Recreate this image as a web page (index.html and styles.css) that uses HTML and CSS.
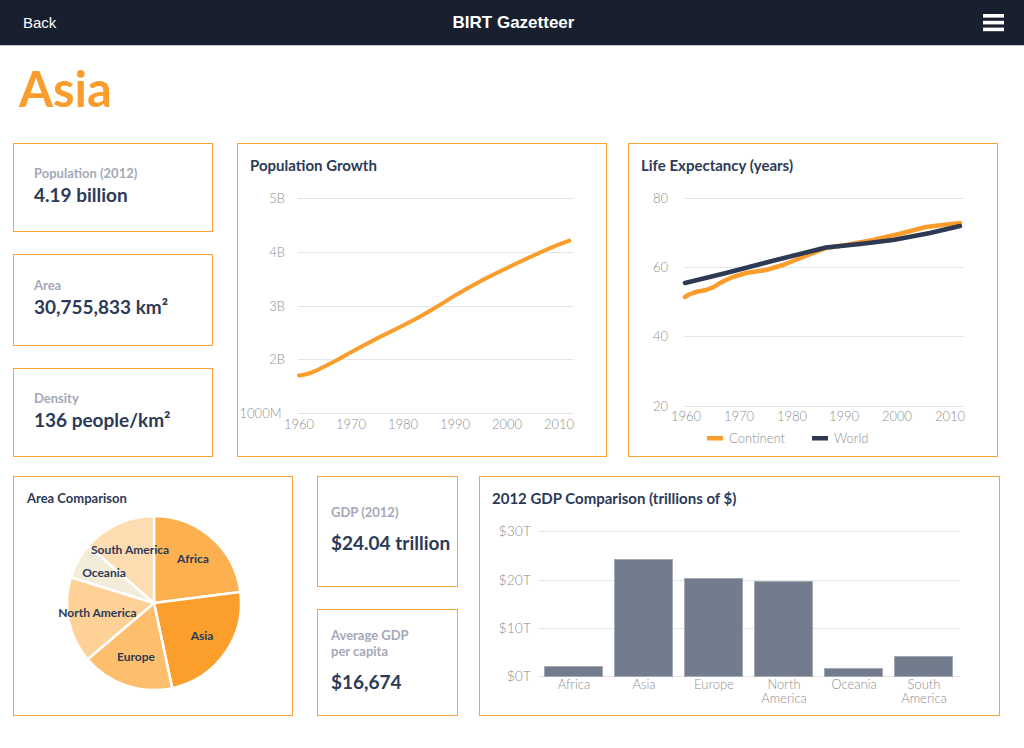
FILE: index.html
```html
<!DOCTYPE html>
<html lang="en">
<head>
<meta charset="utf-8">
<title>BIRT Gazetteer</title>
<link rel="stylesheet" href="styles.css">
</head>
<body>
<header class="topbar">
  <span class="back">Back</span>
  <span class="apptitle">BIRT Gazetteer</span>
  <span class="menu">
    <svg width="21" height="18" viewBox="0 0 21 18"><rect x="0" y="0" width="21" height="3.6" fill="#fff"/><rect x="0" y="6.8" width="21" height="3.6" fill="#fff"/><rect x="0" y="13.6" width="21" height="3.6" fill="#fff"/></svg>
  </span>
</header>

<h1 class="region">Asia</h1>

<section class="row row1">
  <div class="stats">
    <div class="stat s89">
      <div class="label">Population (2012)</div>
      <div class="value">4.19 billion</div>
    </div>
    <div class="stat s92">
      <div class="label">Area</div>
      <div class="value">30,755,833 km²</div>
    </div>
    <div class="stat s89">
      <div class="label">Density</div>
      <div class="value">136 people/km²</div>
    </div>
  </div>

  <div class="card chart popgrowth">
    <h3 class="ctitle">Population Growth</h3>
    <svg class="plot" width="368" height="282" viewBox="0 0 368 282">
      <g stroke="#e3e5e9" stroke-width="1">
        <line x1="60" y1="24.5" x2="335" y2="24.5"/>
        <line x1="60" y1="78.5" x2="335" y2="78.5"/>
        <line x1="60" y1="132.5" x2="335" y2="132.5"/>
        <line x1="60" y1="185.5" x2="335" y2="185.5"/>
        <line x1="60" y1="239.5" x2="335" y2="239.5"/>
      </g>
      <g class="axis" text-anchor="end">
        <text x="47" y="28.5">5B</text>
        <text x="47" y="82.5">4B</text>
        <text x="47" y="136.5">3B</text>
        <text x="47" y="189.5">2B</text>
        <text x="43.5" y="243.5">1000M</text>
      </g>
      <g class="axis" text-anchor="middle">
        <text x="61" y="254.5">1960</text>
        <text x="113" y="254.5">1970</text>
        <text x="165" y="254.5">1980</text>
        <text x="217" y="254.5">1990</text>
        <text x="269" y="254.5">2000</text>
        <text x="321" y="254.5">2010</text>
      </g>
      <polyline fill="none" stroke="#fa9d2c" stroke-width="4" stroke-linejoin="round" stroke-linecap="round"
        points="61,201.4 66,200.8 71.4,199.3 79,196.3 87,192.3 100,185.5 113,178.3 126,171.2 139,164.4 152,158 165,151.5 178,144.8 191,137.5 204,129.6 217,121.4 230,114 243,106.9 256,100.3 269,94 282,87.7 295,81.7 308,75.8 321,70.4 331.4,66.6"/>
    </svg>
  </div>

  <div class="card chart life">
    <h3 class="ctitle">Life Expectancy (years)</h3>
    <svg class="plot" width="368" height="282" viewBox="0 0 368 282">
      <g stroke="#e3e5e9" stroke-width="1">
        <line x1="55" y1="24.5" x2="335" y2="24.5"/>
        <line x1="55" y1="93.5" x2="335" y2="93.5"/>
        <line x1="55" y1="162.5" x2="335" y2="162.5"/>
        <line x1="55" y1="232.5" x2="335" y2="232.5"/>
      </g>
      <g class="axis" text-anchor="end">
        <text x="39" y="28.5">80</text>
        <text x="39" y="97.5">60</text>
        <text x="39" y="166.5">40</text>
        <text x="39" y="236.5">20</text>
      </g>
      <g class="axis" text-anchor="middle">
        <text x="57" y="246.5">1960</text>
        <text x="110" y="246.5">1970</text>
        <text x="163" y="246.5">1980</text>
        <text x="215" y="246.5">1990</text>
        <text x="268" y="246.5">2000</text>
        <text x="321" y="246.5">2010</text>
      </g>
      <polyline fill="none" stroke="#fa9d2c" stroke-width="4.5" stroke-linejoin="round" stroke-linecap="round"
        points="56,123 60,120.5 64,119 69,117.5 77,116 85,113 90,109.5 97,106 104,103 117,99 137,96 154,91 174,83 197,74 217,71 244,66 270,60 297,53 331,49"/>
      <polyline fill="none" stroke="#2d3a52" stroke-width="4.5" stroke-linejoin="round" stroke-linecap="round"
        points="56,109 97,99 147,86 197,73.5 231,70 264,66 301,59 331,52"/>
      <rect x="78" y="262" width="16" height="4.5" fill="#fa9d2c"/>
      <text class="legend" x="100" y="268.5">Continent</text>
      <rect x="183" y="262" width="16" height="4.5" fill="#2d3a52"/>
      <text class="legend" x="205" y="268.5">World</text>
    </svg>
  </div>
</section>

<section class="row row2">
  <div class="card areacomp">
    <h3 class="ctitle small">Area Comparison</h3>
    <svg class="plot" width="278" height="209" viewBox="0 0 278 209">
      <g stroke="#fff" stroke-width="2.5" stroke-linejoin="round">
        <path d="M140 97 L140 10 A87 87 0 0 1 226.3 85.9 Z" fill="#fcb04f"/>
        <path d="M140 97 L226.3 85.9 A87 87 0 0 1 158.2 182.1 Z" fill="#fb9e2b"/>
        <path d="M140 97 L158.2 182.1 A87 87 0 0 1 73.6 153.3 Z" fill="#fdbf6e"/>
        <path d="M140 97 L73.6 153.3 A87 87 0 0 1 56.9 71.3 Z" fill="#fed196"/>
        <path d="M140 97 L56.9 71.3 A87 87 0 0 1 74.5 39.7 Z" fill="#f3ecd9"/>
        <path d="M140 97 L74.5 39.7 A87 87 0 0 1 140 10 Z" fill="#fedcb1"/>
      </g>
      <g class="pielabel" text-anchor="middle">
        <text x="179" y="57">Africa</text>
        <text x="188" y="134">Asia</text>
        <text x="122" y="155">Europe</text>
        <text x="83.5" y="111">North America</text>
        <text x="90" y="71">Oceania</text>
        <text x="116" y="48">South America</text>
      </g>
    </svg>
  </div>

  <div class="stats narrow">
    <div class="stat s111">
      <div class="label">GDP (2012)</div>
      <div class="value big">$24.04 trillion</div>
    </div>
    <div class="stat s107">
      <div class="label">Average GDP<br>per capita</div>
      <div class="value big">$16,674</div>
    </div>
  </div>

  <div class="card gdpcomp">
    <h3 class="ctitle">2012 GDP Comparison (trillions of $)</h3>
    <svg class="plot" width="519" height="208" viewBox="0 0 519 208">
      <g stroke="#e3e5e9" stroke-width="1">
        <line x1="59" y1="24.5" x2="480" y2="24.5"/>
        <line x1="59" y1="73.5" x2="480" y2="73.5"/>
        <line x1="59" y1="121.5" x2="480" y2="121.5"/>
        <line x1="59" y1="169.5" x2="480" y2="169.5"/>
      </g>
      <g class="axis ax14" text-anchor="end">
        <text x="51" y="29">$30T</text>
        <text x="51" y="78">$20T</text>
        <text x="51" y="126">$10T</text>
        <text x="51" y="174">$0T</text>
      </g>
      <g fill="#737c8c" stroke="#a3a8b2" stroke-width="1">
        <rect x="64.5" y="159.5" width="58" height="10"/>
        <rect x="134.5" y="52.5" width="58" height="117"/>
        <rect x="204.5" y="71.5" width="58" height="98"/>
        <rect x="274.5" y="74.5" width="58" height="95"/>
        <rect x="344.5" y="161.5" width="58" height="8"/>
        <rect x="414.5" y="149.5" width="58" height="20"/>
      </g>
      <g class="axis" text-anchor="middle">
        <text x="94" y="182">Africa</text>
        <text x="164" y="182">Asia</text>
        <text x="234" y="182">Europe</text>
        <text x="304" y="182">North</text>
        <text x="304" y="196">America</text>
        <text x="374" y="182">Oceania</text>
        <text x="444" y="182">South</text>
        <text x="444" y="196">America</text>
      </g>
    </svg>
  </div>
</section>
</body>
</html>
```

FILE: styles.css
```css
* {
  box-sizing: border-box;
}

html, body {
  margin: 0;
  padding: 0;
  background: #ffffff;
}

body {
  font-family: Lato, "Open Sans", "Liberation Sans", sans-serif;
  color: #2c3a57;
  width: 1024px;
  height: 748px;
  overflow: hidden;
}

/* Top bar */
.topbar {
  height: 46px;
  background: #182030;
  border-bottom: 1px solid #c3c6cc;
  display: grid;
  grid-template-columns: 1fr auto 1fr;
  align-items: center;
  padding: 0 20px 0 23px;
  font-family: "Liberation Sans", Arial, sans-serif;
  color: #ffffff;
}

.back {
  font-size: 15px;
  justify-self: start;
}

.apptitle {
  font-size: 17px;
  font-weight: bold;
}

.menu {
  justify-self: end;
  display: flex;
}

.menu svg {
  display: block;
}

/* Region title */
.region {
  margin: 18px 0 0 19px;
  font-size: 49px;
  line-height: 48px;
  font-weight: 700;
  color: #fa9d2c;
}

/* Rows */
.row {
  display: flex;
  margin-left: 13px;
}

.row1 {
  margin-top: 31px;
  height: 314px;
}

.row2 {
  margin-top: 19px;
  height: 240px;
}

.stats {
  width: 200px;
  display: flex;
  flex-direction: column;
  gap: 22px;
}

.stats.narrow {
  width: 141px;
  margin-left: 24px;
}

.stat {
  border: 1px solid #f9a13a;
  display: flex;
  flex-direction: column;
  justify-content: center;
  padding: 0 8px 5px 20px;
}

.stat.s111,
.stat.s107 {
  padding-left: 13px;
}

.s89 { height: 89px; }
.s92 { height: 92px; }
.s111 { height: 111px; }
.s107 { height: 107px; }

.label {
  font-size: 13px;
  line-height: 16px;
  font-weight: 700;
  color: #a3a9b8;
}

.value {
  margin-top: 3px;
  font-size: 19px;
  line-height: 22px;
  font-weight: 700;
  color: #2c3a57;
  white-space: nowrap;
}

.value.big {
  margin-top: 12px;
}

/* Cards */
.card {
  border: 1px solid #f9a13a;
  display: flex;
  flex-direction: column;
}

.chart {
  width: 370px;
}

.popgrowth {
  margin-left: 24px;
}

.life {
  margin-left: 21px;
}

.areacomp {
  width: 280px;
}

.gdpcomp {
  width: 521px;
  margin-left: 21px;
}

.ctitle {
  margin: 0;
  padding: 12px 12px 0 12px;
  font-size: 15px;
  line-height: 18px;
  font-weight: 700;
  color: #2c3a57;
  white-space: nowrap;
}

.ctitle.small {
  padding: 13px 13px 0 13px;
  font-size: 13px;
  line-height: 16px;
}

.plot {
  display: block;
}

.axis {
  font-family: Lato, "Open Sans", sans-serif;
  font-size: 13px;
  font-weight: 300;
  fill: #8f8f8f;
}

.ax14 {
  font-size: 14px;
}

.legend {
  font-family: Lato, "Open Sans", sans-serif;
  font-size: 13px;
  font-weight: 300;
  fill: #8f8f8f;
}

.pielabel {
  font-family: Lato, "Open Sans", sans-serif;
  font-size: 12px;
  font-weight: 700;
  fill: #2c3a57;
}
```
